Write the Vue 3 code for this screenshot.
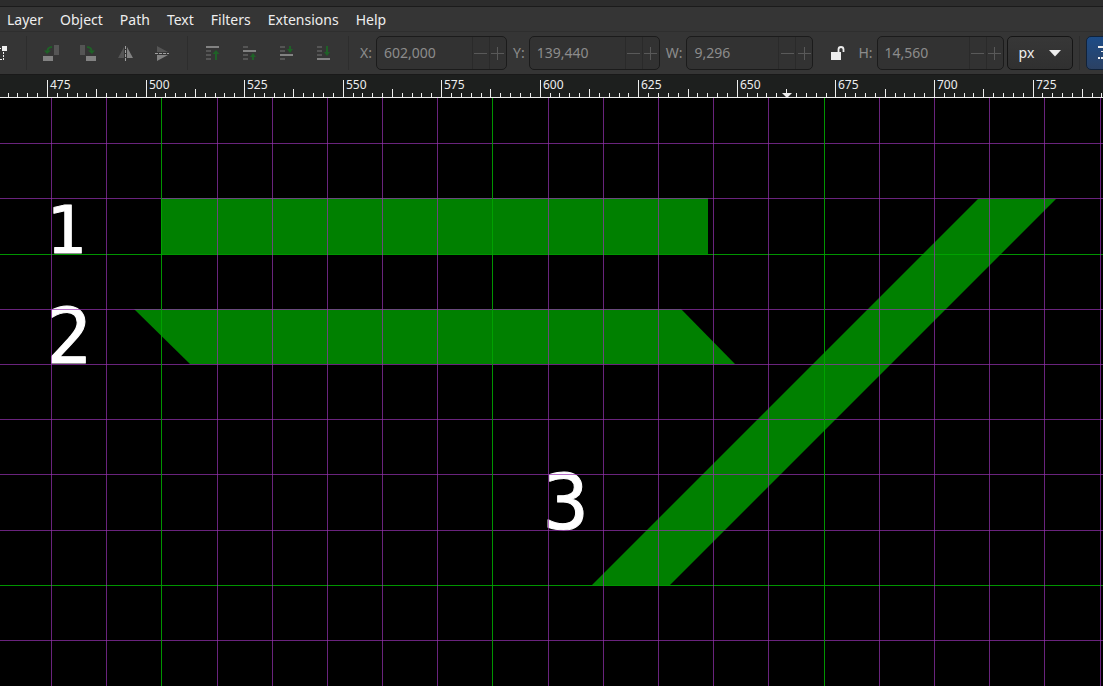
<script setup>
import { computed, onMounted, onUnmounted, ref } from 'vue'

const menus = ['Layer', 'Object', 'Path', 'Text', 'Filters', 'Extensions', 'Help']

const fields = ref([
  { id: 'x', label: 'X:', value: '602,000', wide: true },
  { id: 'y', label: 'Y:', value: '139,440', wide: true },
  { id: 'w', label: 'W:', value: '9,296', wide: false },
  { id: 'h', label: 'H:', value: '14,560', wide: false }
])
const unit = ref('px')

const width = ref(window.innerWidth)
const height = ref(window.innerHeight)
function measure() {
  width.value = window.innerWidth
  height.value = window.innerHeight
}
onMounted(() => window.addEventListener('resize', measure))
onUnmounted(() => window.removeEventListener('resize', measure))

const labelWidth = 28
const ticks = computed(() => {
  const list = []
  for (let i = -4; 47.5 + 9.855 * i < width.value; i++) {
    const rank = ((i % 10) + 10) % 10
    const x = Math.floor(47.5 + 9.855 * i)
    list.push({
      x,
      h: rank === 0 ? 17 : rank === 5 ? 8 : 4,
      label: rank === 0 && x + labelWidth < width.value ? String(475 + i * 2.5) : ''
    })
  }
  return list
})

const step = 55.19
function gridLines(origin, extent) {
  const list = []
  for (let i = 0; origin + step * i < extent; i++) {
    list.push({ at: Math.round(origin + step * i), major: i % 6 === 2 })
  }
  return list
}
const columns = computed(() => gridLines(50.95, width.value))
const rows = computed(() => gridLines(45.2, height.value))
</script>

<template>
  <div class="app">
    <div class="titlebar"></div>
    <nav class="menubar" aria-label="Main menu">
      <button v-for="m in menus" :key="m" type="button">{{ m }}</button>
    </nav>

    <div class="toolbar" role="toolbar" aria-label="Selector controls">
      <button class="tool first" type="button" aria-label="Toggle selection box">
        <svg width="20" height="18" viewBox="0 0 20 18" shape-rendering="crispEdges">
          <rect x="2" y="2" width="5" height="5" fill="#eee" />
          <path d="M0 4h1v1H0zM3 8h1v2H3zM3 11h1v2H3zM3 14h1v2H3zM0 15h2v1H0z" fill="#eee" />
        </svg>
      </button>
      <span class="sep"></span>
      <button class="tool" type="button" disabled aria-label="Rotate 90° counter-clockwise">
        <svg width="17" height="18" viewBox="0 0 17 18">
          <path d="M11 1h5v10h-5z" fill="#555" /><path d="M0 12h10v5H0z" fill="#828282" />
          <path d="M9 3C6 3 4.500 5 4.500 7" fill="none" stroke="#1f6127" stroke-width="2" />
          <path d="M1 6.500h7L4 10z" fill="#1f6127" />
        </svg>
      </button>
      <button class="tool" type="button" disabled aria-label="Rotate 90° clockwise">
        <svg width="17" height="18" viewBox="0 0 17 18">
          <path d="M0 1h5v10H0z" fill="#555" /><path d="M6 12h10v5H6z" fill="#828282" />
          <path d="M7 3c3 0 4.500 2 4.500 4" fill="none" stroke="#1f6127" stroke-width="2" />
          <path d="M8 6.500h7L12 10z" fill="#1f6127" />
        </svg>
      </button>
      <button class="tool" type="button" disabled aria-label="Flip horizontally">
        <svg width="17" height="18" viewBox="0 0 17 18">
          <path d="M7 3v11H1z" fill="#555" /><path d="M10 3v11h6z" fill="#828282" />
          <path d="M8.500 2v15" stroke="#a0a0a0" stroke-dasharray="3 1" />
        </svg>
      </button>
      <button class="tool" type="button" disabled aria-label="Flip vertically">
        <svg width="17" height="18" viewBox="0 0 17 18">
          <path d="M3 2v6h11z" fill="#555" /><path d="M3 11h11L3 17z" fill="#828282" />
          <path d="M1 9.500h14" stroke="#a0a0a0" stroke-dasharray="3 1" />
        </svg>
      </button>
      <span class="sep"></span>
      <button class="tool" type="button" disabled aria-label="Raise to top">
        <svg width="17" height="18" viewBox="0 0 17 18">
          <path d="M2 6h5v2H2zM2 10h5v2H2zM2 14h5v2H2z" fill="#555" /><path d="M2 2h13v2H2z" fill="#828282" />
          <path d="M12 6l3.500 4H13v6h-2v-6H8.500z" fill="#1f6127" />
        </svg>
      </button>
      <button class="tool" type="button" disabled aria-label="Raise one step">
        <svg width="17" height="18" viewBox="0 0 17 18">
          <path d="M2 2h5v2H2zM2 10h5v2H2zM2 14h5v2H2z" fill="#555" /><path d="M2 6h13v2H2z" fill="#828282" />
          <path d="M12 9l3 4h-2v3h-2v-3H9z" fill="#1f6127" />
        </svg>
      </button>
      <button class="tool" type="button" disabled aria-label="Lower one step">
        <svg width="17" height="18" viewBox="0 0 17 18">
          <path d="M2 2h5v2H2zM2 6h5v2H2zM2 14h5v2H2z" fill="#555" /><path d="M2 10h13v2H2z" fill="#828282" />
          <path d="M12 9l3-4h-2V2h-2v3H9z" fill="#1f6127" />
        </svg>
      </button>
      <button class="tool" type="button" disabled aria-label="Lower to bottom">
        <svg width="17" height="18" viewBox="0 0 17 18">
          <path d="M2 2h5v2H2zM2 6h5v2H2zM2 10h5v2H2z" fill="#555" /><path d="M2 14h13v2H2z" fill="#828282" />
          <path d="M12 12l3-4h-2V2h-2v6H9z" fill="#1f6127" />
        </svg>
      </button>
      <span class="sep"></span>

      <template v-for="f in fields" :key="f.id">
        <button v-if="f.id === 'h'" class="lock" type="button" aria-label="Lock width and height">
          <svg width="14" height="15" viewBox="0 0 14 15">
            <path d="M0 6h10v8H0z" fill="#eee" />
            <path d="M7.500 6V3.500a2.500 2.500 0 0 1 5 0V6" fill="none" stroke="#eee" stroke-width="1.800" />
          </svg>
        </button>
        <div class="field">
          <label :for="f.id">{{ f.label }}</label>
          <div class="spin" :class="{ wide: f.wide }">
            <input :id="f.id" v-model="f.value" type="text" disabled />
            <button type="button" disabled aria-label="Decrease">
              <svg width="13" height="13"><path d="M0 6h13v1H0z" fill="#595959" /></svg>
            </button>
            <button type="button" disabled aria-label="Increase">
              <svg width="13" height="13"><path d="M0 6h13v1H0zM6 0h1v13H6z" fill="#595959" /></svg>
            </button>
          </div>
        </div>
      </template>

      <div class="unit">
        <select v-model="unit" aria-label="Unit">
          <option>px</option>
          <option>mm</option>
        </select>
        <svg width="12" height="7" viewBox="0 0 12 7"><path d="M0 0h12L6 6.500z" fill="#eee" /></svg>
      </div>
      <span class="sep"></span>
      <button class="toggle" type="button" aria-label="Scale stroke width">
        <svg width="20" height="18" viewBox="0 0 20 18" shape-rendering="crispEdges">
          <path d="M0 2h20v2H0zM3 7h16v1H3zM0 13h2v2H0zM3 13h2v2H3zM6 13h2v2H6z" fill="#eee" />
        </svg>
      </button>
    </div>

    <svg class="ruler" height="23">
      <rect v-for="t in ticks" :key="t.x" :x="t.x" :y="22 - t.h" width="1" :height="t.h" />
      <template v-for="t in ticks" :key="t.x">
        <text v-if="t.label" :x="t.x + 3" y="14">{{ t.label }}</text>
      </template>
      <rect x="0" y="22" width="100%" height="1" />
      <path d="M782 18h10l-4 4h-2z" />
    </svg>

    <main class="canvas">
      <svg width="100%" height="100%">
        <g fill="#008000">
          <path d="M161 100H708V156H161z" />
          <path d="M134 211H681L735 266H190z" />
          <path d="M978 101H1056L670 487H592z" />
        </g>
        <g class="digits">
          <text class="small" x="46" y="155">1</text>
          <text x="46" y="265">2</text>
          <text x="543" y="431">3</text>
        </g>
        <rect v-for="r in rows" :key="'r' + r.at" x="0" :y="r.at" width="100%" height="1" :class="r.major ? 'major' : 'minor'" />
        <rect v-for="c in columns" :key="'c' + c.at" :x="c.at" y="0" width="1" height="100%" :class="c.major ? 'major' : 'minor'" />
      </svg>
    </main>
  </div>
</template>

<style>
body {
  margin: 0;
  background: #000;
}
</style>

<style scoped>
.app {
  display: flex;
  flex-direction: column;
  height: 100vh;
  overflow: hidden;
  font: 14px/20px "Noto Sans", "Open Sans", sans-serif;
  color: #eee;
  background: #353535;
}
button,
input,
select {
  box-sizing: border-box;
  margin: 0;
  padding: 0;
  border: 0;
  background: none;
  color: inherit;
  font: inherit;
}
svg {
  display: block;
  flex: none;
}
.titlebar {
  flex: none;
  height: 6px;
  background: #2c2c2c;
  border-bottom: 1px solid #1b1b1b;
}
.menubar {
  display: flex;
  flex: none;
  box-sizing: border-box;
  height: 25px;
  padding-top: 2px;
  border-bottom: 1px solid #2e2e2e;
}
.menubar button {
  padding: 0 8px 0 9px;
  white-space: nowrap;
}
.menubar button:first-child {
  padding-left: 7px;
}
.toolbar {
  display: flex;
  flex: none;
  align-items: center;
  height: 42px;
  border-bottom: 1px solid #191919;
}
.sep {
  flex: none;
  width: 1px;
  height: 34px;
  margin: 0 6px;
  background: #2d2d2d;
}
.tool {
  display: flex;
  flex: none;
  justify-content: center;
  width: 37px;
}
.tool.first {
  justify-content: flex-start;
  width: 20px;
}
.lock {
  flex: none;
  margin-left: 18px;
  margin-right: 7px;
}
.field {
  display: flex;
  flex: none;
  align-items: center;
  gap: 4px;
  margin-left: 6px;
  color: #8c8c8c;
}
.sep + .field {
  margin-left: 5px;
}
.spin {
  display: flex;
  box-sizing: border-box;
  width: 127px;
  height: 34px;
  border: 1px solid #1b1b1b;
  border-radius: 5px;
  background: #323232;
}
.spin.wide {
  width: 131px;
}
.spin input {
  flex: 1;
  min-width: 0;
  padding-left: 7px;
}
.spin button {
  display: flex;
  align-items: center;
  justify-content: center;
  width: 17px;
  border-left: 1px solid #2a2a2a;
}
.unit {
  position: relative;
  flex: none;
  margin-left: 3px;
}
.unit select {
  display: block;
  width: 66px;
  height: 34px;
  padding-left: 11px;
  border: 1px solid #151515;
  border-radius: 5px;
  appearance: none;
  background: linear-gradient(#373737, #303030);
}
.unit svg {
  position: absolute;
  top: 14px;
  right: 12px;
  pointer-events: none;
}
.toggle {
  display: flex;
  flex: none;
  align-items: center;
  width: 38px;
  height: 34px;
  padding-left: 11px;
  border: 1px solid #10223a;
  border-radius: 5px;
  background: linear-gradient(#1d4c87, #2b4163);
}
.ruler {
  width: 100%;
  background: #1d1f1e;
  fill: #eee;
  font-size: 12px;
}
.ruler rect {
  shape-rendering: crispEdges;
}
.canvas {
  flex: 1;
  min-height: 0;
  background: #000;
}
.digits {
  fill: #fff;
  stroke: #fff;
  stroke-width: 1px;
  stroke-linejoin: round;
  font: 76px "DejaVu Sans Mono", monospace;
}
.digits .small {
  font-size: 66px;
}
.minor {
  fill: #9632b0;
  fill-opacity: 0.7;
}
.major {
  fill: #00a400;
  fill-opacity: 0.9;
}
</style>
